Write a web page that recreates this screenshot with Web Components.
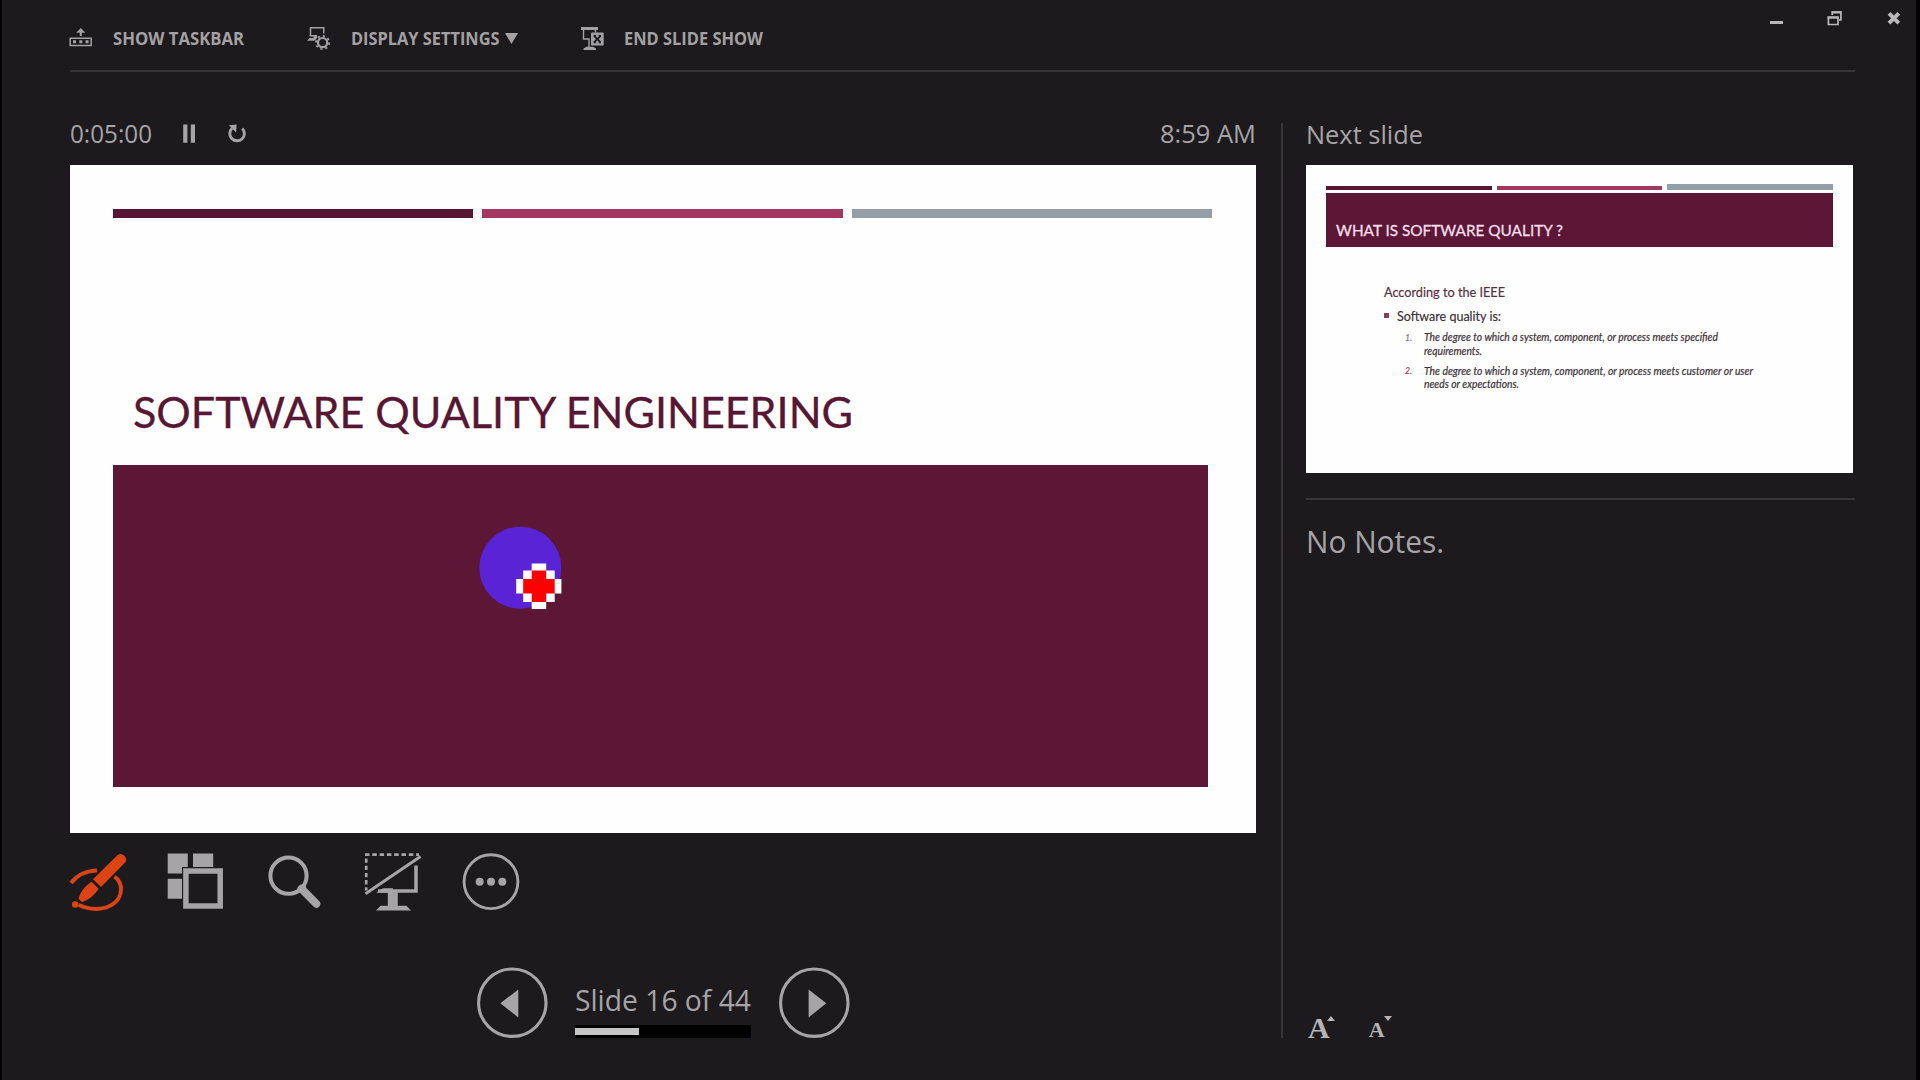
<!DOCTYPE html>
<html lang="en">
<head>
<meta charset="utf-8">
<title>Presenter View</title>
<style>
html,body{margin:0;background:#000}
body{width:1920px;height:1080px;overflow:hidden;font-family:"Open Sans","Noto Sans",sans-serif;color:#a6a4a6}
</style>
</head>
<body>
<presenter-view></presenter-view>
<script>
const define=(name,html,init)=>customElements.define(name,class extends HTMLElement{
  constructor(){super();const t=document.createElement('template');t.innerHTML=html;
    this.attachShadow({mode:'open'}).append(t.content.cloneNode(true));}
  connectedCallback(){if(init)init(this,this.shadowRoot);}
});

/* One line of text stretched to an exact width: w = width, s = font size, h = line box */
define('fit-text',`<style>:host{display:block;flex:none;white-space:nowrap}
span{display:inline-block;transform-origin:0 50%;vertical-align:top}</style><span><slot></slot></span>`,(el,root)=>{
  const s=root.querySelector('span'),w=+el.getAttribute('w');
  el.style.width=w+'px';el.style.fontSize=el.getAttribute('s')+'px';
  el.style.height=el.style.lineHeight=(el.getAttribute('h')||30)+'px';
  s.style.transform='scaleX('+w/s.getBoundingClientRect().width+')';
});

/* Glyphs, each with its own viewBox */
const G={
taskbar:['69 28 24 24',`<path d="M70.2 40.2h21v7.2h-21z" fill="none" stroke="currentColor" stroke-width="1.5"/><path d="M73 42.3h3v3h-3zM79.3 42.3h3v3h-3zM85.6 42.3h3v3h-3zM79.8 38v-3.2h-3.6l4.6-4.8 4.6 4.8h-3.6V38z"/>`],
display:['307 27 25 25',`<path d="M310.5 36.8v-8h13.3v5.6M309.5 36.8h7.5M313.5 38.2h3l-2 3" fill="none" stroke="currentColor" stroke-width="1.5"/><path d="M309.5 39h6l-1.2 2.8H307z"/><g fill="none" stroke="currentColor"><circle cx="322.6" cy="43.6" r="4.6" stroke-width="2.2"/><circle cx="322.6" cy="43.6" r="6.6" stroke-width="1.8" stroke-dasharray="2.3 2.884"/></g>`],
end:['580 27 26 25',`<path d="M581 28h17v3h-17zM583.5 51v-1.5l3-1.7h6.5l3 1.7V51z"/><path d="M583.5 30v10h5.5V48M595.5 30v3.5" fill="none" stroke="currentColor" stroke-width="1.4"/><rect x="591" y="33.5" width="12.7" height="13" rx="1"/><path d="M594 36.8l6.6 6.6M600.6 36.8l-6.6 6.6" stroke="#1c1a1d" stroke-width="1.9"/><path d="M593.6 36.4h2.5M598.5 36.4h2.5M593.6 43.8h2.5M598.5 43.8h2.5" stroke="#1c1a1d" stroke-width="1"/>`],
restore:['1826 10 18 17',`<g fill="none" stroke="currentColor"><path d="M1832.3 15v-3h8.6v8h-2" stroke-width="1.7"/><path d="M1831.5 12.4h10" stroke-width="2.2"/><path d="M1828.4 17.3h9.6v7.2h-9.6z" stroke-width="1.7"/><path d="M1827.6 17.5h11.2" stroke-width="2.2"/></g>`],
close:['1886 11 16 15',`<path d="M1889 13.4l9.8 9.8M1898.8 13.4l-9.8 9.8" stroke="currentColor" stroke-width="4"/>`],
pause:['181 124 16 21',`<path d="M183.2 125.4h4.2v18.3h-4.2zM190.8 125.4h4.2v18.3h-4.2z"/>`],
reset:['225 122 24 26',`<path d="M242.3 129.4a7.3 7.3 0 1 1-10.3-.1" fill="none" stroke="currentColor" stroke-width="2.9"/><path d="M228.8 126.2l7.8-.8-.5 8z"/>`],
pen:['68 851 60 61',`<g fill="none" stroke="currentColor" stroke-width="4"><path d="M71 883C77 875 87 870.5 97 870.4"/><path d="M114.5 876.6C124 883 122.500 897 113.800 903.500C104.500 910.500 90 910.500 78.500 904.800"/></g><path d="M117.400 855.300c4-3.500 10.600 1.400 8.200 6.700L101 887l-8-7.800zM91.600 881.700l7 7c-4.500 6.900-10.600 11.600-17.300 13.600l-2.900-3c1.600-7 6-13 13.200-17.600z"/><circle cx="75.200" cy="904.500" r="3.200"/><path d="M91 879l9.500 9.500M77.500 898.700l4.500 4.200" stroke="#1c1a1d" stroke-width="1.200"/>`],
slides:['166 851 60 60',`<path d="M167.700 853.400h20.100v20.100h-20.100zM193 853.400h20.200v13.600H193zM167.700 878.700h14.500v20h-14.500z"/><path d="M182 867h42v43h-42z" fill="#1c1a1d"/><path d="M185.900 871h34.300v35h-34.300z" fill="none" stroke="currentColor" stroke-width="5.500"/>`],
zoom:['266 851 58 60',`<circle cx="288.500" cy="875.700" r="18.100" fill="none" stroke="currentColor" stroke-width="4"/><path d="M301.500 888.800l14.800 15" stroke="currentColor" stroke-width="8" stroke-linecap="round"/><path d="M299.500 892l6-6" stroke="currentColor" stroke-width="3"/>`],
screen:['363 851 60 62',`<g fill="none" stroke="currentColor"><path d="M365 854.600h54" stroke-width="2.700" stroke-dasharray="4.500 2.800"/><path d="M366.200 858.500v32" stroke-width="2.700" stroke-dasharray="4.300 2.900"/><path d="M365.500 893.700L420.500 856.500" stroke-width="3"/><path d="M416 865.500V891h-38" stroke-width="3.600"/></g><path d="M376 892.800l7-4.500h10v4.500zM387.800 891h10v15h-10zM376 910.500l4.500-4.700h26l4.500 4.700z"/>`],
more:['461 851 60 60',`<circle cx="491" cy="881.700" r="26.900" fill="none" stroke="currentColor" stroke-width="2.900"/><circle cx="479.700" cy="881.700" r="4"/><circle cx="491" cy="881.700" r="4"/><circle cx="502.300" cy="881.700" r="4"/>`],
prev:['476 967 72 72',`<circle cx="512.300" cy="1002.700" r="33.700" fill="none" stroke="currentColor" stroke-width="3.100"/><path d="M500.300 1003.300L518.300 989.500v28z"/>`],
next:['778 967 72 72',`<circle cx="814.300" cy="1002.700" r="33.700" fill="none" stroke="currentColor" stroke-width="3.100"/><path d="M826.300 1003.300L808.600 989.500v28z"/>`],
up:['0 0 8 5','<path d="M0 5L4 0l4 5z"/>'],
down:['0 0 8 5','<path d="M0 0h8L4 5z"/>'],
caret:['0 0 13 11','<path d="M0 0h13L6.500 11z"/>'],
pointer:['478 525 86 88',`<circle cx="520.300" cy="567.700" r="41" fill="#5a24d6"/><path fill="#fff" d="M531.700 563.600h14.500v7h8.500v8.300h6.700v14.700h-6.700v8.500h-8.500v7h-14.500v-7h-8.500v-8.500h-7v-14.700h7v-8.300h8.500z"/><path fill="#f00" d="M531.700 570.600h14.500v8.300h8.500v14.700h-8.500v8.500h-14.500v-8.500h-8.500v-14.700h8.500z"/>`]
};
define('ui-icon',`<style>:host{display:block;flex:none}svg{display:block;fill:currentColor}</style><div></div>`,(el,root)=>{
  const [vb,p]=G[el.getAttribute('name')],b=vb.split(' ');
  root.querySelector('div').innerHTML=`<svg viewBox="${vb}" width="${b[2]}" height="${b[3]}">${p}</svg>`;
});

define('tool-bar',`<style>:host{display:flex;height:70px;border-bottom:2px solid #363537;margin:0 61px 0 68px;font-weight:700;color:#a3a1a3}
.item{display:flex;align-items:center;height:76px}
.a{gap:20px;margin-left:-1px}.b{margin-left:62.500px;gap:19px}.c{margin-left:61.500px;gap:18px}
ui-icon[name=caret]{margin-left:-13px}</style>
<div class="item a"><ui-icon name="taskbar"></ui-icon><fit-text w="131" s="17.800">SHOW TASKBAR</fit-text></div>
<div class="item b"><ui-icon name="display"></ui-icon><fit-text w="148.500" s="17.800">DISPLAY SETTINGS</fit-text><ui-icon name="caret"></ui-icon></div>
<div class="item c"><ui-icon name="end"></ui-icon><fit-text w="139" s="17.800">END SLIDE SHOW</fit-text></div>`);

define('window-controls',`<style>:host{position:absolute;top:10px;right:14px;display:flex;align-items:flex-start;color:#b9b7b9}
i{width:13px;height:3px;margin:11px 43px 0 0;background:currentColor}ui-icon+ui-icon{margin:1px 0 0 42px}</style>
<i></i><ui-icon name="restore"></ui-icon><ui-icon name="close"></ui-icon>`);

define('slide-bars',`<style>:host{display:flex}
i{flex:1}i:nth-of-type(1){background:#571634}i:nth-of-type(2){background:#a23760}i:nth-of-type(3){background:#939ea6}
:host([small]) i:nth-of-type(-n+2){margin-top:2px}</style><i></i><i></i><i></i>`);

define('current-slide',`<style>:host{display:flex;flex-direction:column;position:relative;box-sizing:border-box;width:1186px;height:668px;background:#fefefe;padding:44px 44px 0 43px}
slide-bars{height:9px;gap:9px}
fit-text{font-family:Lato,sans-serif;color:#571634;-webkit-text-stroke:.3px #571634;margin:164px 0 0 20px}
.block{width:1095px;height:322px;margin-top:23px;background:#5b1735}
ui-icon{position:absolute;left:408px;top:360px}</style>
<slide-bars></slide-bars><fit-text w="720" s="42.500" h="60">SOFTWARE QUALITY ENGINEERING</fit-text><div class="block"></div><ui-icon name="pointer"></ui-icon>`);

define('next-slide',`<style>:host{display:block;box-sizing:border-box;width:547px;height:308px;background:#fefefe;padding:19px 20px 0;font-family:Lato,sans-serif;color:#3c3038}
slide-bars{height:6px;gap:5px}
.title{box-sizing:border-box;height:54px;margin-top:3px;padding:22px 0 0 10px;background:#5b1735;color:#f5dfea;-webkit-text-stroke:.3px #f5dfea}
.body{padding:32px 0 0 58px;-webkit-text-stroke:.2px currentColor}
.row{display:flex;align-items:center}
.row i{width:5px;height:5px;margin-right:8px;background:#85405a}
ol{list-style:none;margin:0;padding:0 0 0 21px}
li{display:flex;font-style:italic}
li .n{margin-right:12px}.red{color:#b03a60}.gray{color:#8d7680}
.acc{color:#573043}</style>
<slide-bars small></slide-bars>
<div class="title"><fit-text w="227" s="16.200" h="30">WHAT IS SOFTWARE QUALITY ?</fit-text></div>
<div class="body"><fit-text class="acc" w="121" s="14.200" h="25">According to the IEEE</fit-text>
<div class="row"><i></i><fit-text w="104" s="13.800" h="23">Software quality is:</fit-text></div>
<ol><li style="margin-top:3px"><fit-text class="n gray" w="7" s="10" h="14">1.</fit-text><div><fit-text w="294" s="10.800" h="14">The degree to which a system, component, or process meets specified</fit-text><fit-text w="58" s="10.800" h="14">requirements.</fit-text></div></li>
<li style="margin-top:6px"><fit-text class="n red" w="7" s="10" h="13">2.</fit-text><div><fit-text w="329" s="10.800" h="13">The degree to which a system, component, or process meets customer or user</fit-text><fit-text w="95" s="10.800" h="13">needs or expectations.</fit-text></div></li></ol></div>`);

define('slide-nav',`<style>:host{display:flex;justify-content:center}
.mid{width:176px;margin:0 27px 0 27px;padding-top:13px}
.bar{box-sizing:border-box;height:13px;margin-top:5px;padding:3px 0;background:#000}
.bar i{display:block;width:64px;height:7px;background:#c6c5c6}</style>
<ui-icon name="prev"></ui-icon><div class="mid"><fit-text w="176" s="30" h="40">Slide 16 of 44</fit-text><div class="bar"><i></i></div></div><ui-icon name="next"></ui-icon>`);

define('main-pane',`<style>:host{display:block;width:1186px}
.status{display:flex;align-items:center;height:42px;padding-top:17px;margin-bottom:11px}
.status ui-icon{padding-top:1px}
.tools{display:flex;margin:18px 0 0 -2px}
.time{margin-left:auto}
slide-nav{margin-top:54px}</style>
<div class="status"><fit-text w="82" s="26">0:05:00</fit-text><ui-icon name="pause" style="margin-left:29px"></ui-icon><ui-icon name="reset" style="margin-left:28px"></ui-icon><fit-text class="time" w="96" s="26">8:59 AM</fit-text></div>
<current-slide></current-slide>
<div class="tools"><ui-icon name="pen" style="color:#dc4416"></ui-icon><ui-icon name="slides" style="margin-left:38px"></ui-icon><ui-icon name="zoom" style="margin-left:40px"></ui-icon><ui-icon name="screen" style="margin-left:39px"></ui-icon><ui-icon name="more" style="margin-left:38px"></ui-icon></div>
<slide-nav></slide-nav>`);

define('notes-pane',`<style>:host{display:flex;flex-direction:column;box-sizing:border-box;width:574px;height:915px;border-left:2px solid #363537;padding-left:23px;margin:51px 0 0 25px}
.label{height:42px}
.label fit-text{margin-top:-1px}
hr{width:549px;height:2px;border:0;background:#363537;margin:25px 0 23px}
.fonts{display:flex;align-items:flex-end;margin-top:auto;padding-left:2px;font:bold 30px/20px "Liberation Serif",serif;color:#b5b3b5}
.fonts span{display:block;height:20px}.fonts .s{font-size:22px;margin-left:34px;height:18px}
.fonts ui-icon{margin-bottom:17px}</style>
<div class="label"><fit-text w="117" s="26" h="24">Next slide</fit-text></div>
<next-slide></next-slide><hr><fit-text w="138" s="31" h="36">No Notes.</fit-text>
<div class="fonts"><span>A</span><ui-icon name="up" style="margin-left:-3px"></ui-icon><span class="s">A</span><ui-icon name="down" style="margin-left:-1px"></ui-icon></div>`);

define('presenter-view',`<style>:host{display:block;position:relative;box-sizing:border-box;width:1920px;height:1080px;background:#1c1a1d;border:solid #000;border-width:0 4px 0 2px}
main{display:flex;padding-left:68px}
main-pane{padding-top:23px}</style>
<tool-bar></tool-bar><window-controls></window-controls>
<main><main-pane></main-pane><notes-pane></notes-pane></main>`);
</script>
</body>
</html>
